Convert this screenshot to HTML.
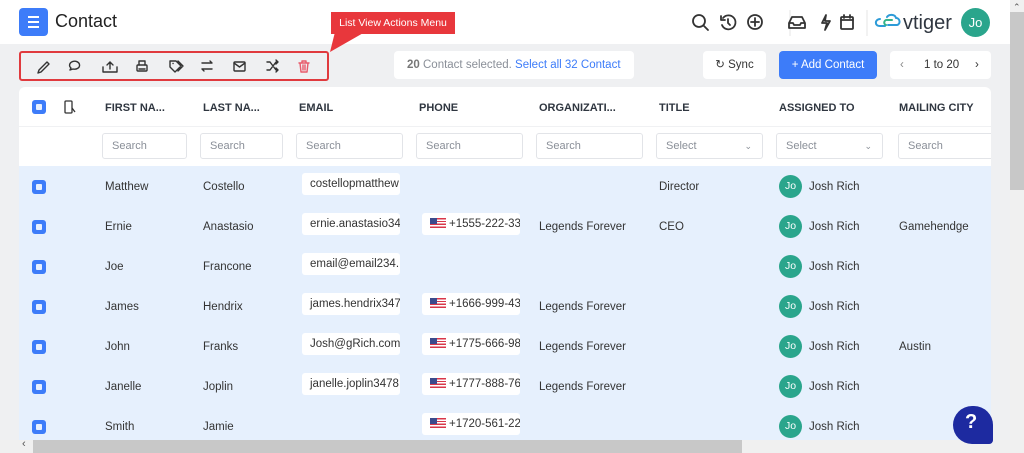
<!DOCTYPE html>
<html><head><meta charset="utf-8"><style>
*{box-sizing:border-box;margin:0;padding:0}
body{width:1024px;height:453px;overflow:hidden;background:#eff0f2;font-family:"Liberation Sans",sans-serif;color:#2b2f36;position:relative}
.abs{position:absolute}
.top{left:0;top:0;width:1010px;height:44px;background:#fff}
.vs{left:1010px;top:0;width:14px;height:453px;background:#f0f0f0}
.card{left:19px;top:87px;width:972px;height:353px;background:#fff;border-radius:6px 6px 0 0;overflow:hidden}
.row{position:absolute;left:0;width:972px;height:40px;background:#e6f0fd;font-size:11.5px;color:#333}
.row .t{top:15px}
.cb{position:absolute;left:13px;width:14px;height:14px;border-radius:3px;background:#3d7cf9}
.cb:after{content:"";position:absolute;left:4px;top:4px;width:6px;height:6px;border-radius:1px;background:#e9f0fd}
.t{position:absolute;white-space:nowrap}
.chip{position:absolute;height:22px;background:#fff;border-radius:3px;overflow:hidden;white-space:nowrap;font-size:11.5px;line-height:22px;padding-left:8px}
.av{position:absolute;width:23px;height:23px;border-radius:50%;background:#2aa58c;color:#fff;font-size:10.5px;text-align:center;line-height:23px}
.hd{position:absolute;top:15px;font-size:11px;font-weight:bold;color:#2f3640}
.in{position:absolute;top:46px;height:26px;border:1px solid #e2e4e8;border-radius:3px;font-size:11px;color:#8a8f98;line-height:24px;padding-left:9px;background:#fff}
.flag{display:inline-block;width:16px;height:10px;vertical-align:-1px;margin-right:3px;background:repeating-linear-gradient(#d9374a 0 1.4px,#fff 1.4px 2.8px);position:relative}
.flag:before{content:"";position:absolute;left:0;top:0;width:7px;height:6px;background:#3c4a8c}
</style></head><body>
<div class="abs top"></div>
<div class="abs" style="left:19px;top:8px;width:29px;height:28px;background:#3d7cf9;border-radius:4px"></div>
<div class="abs" style="left:28px;top:16px;width:11px;height:2px;background:#fff;box-shadow:0 5px 0 #fff,0 10px 0 #fff"></div>
<div class="abs" style="left:55px;top:11px;font-size:18px;color:#222">Contact</div>

<svg class="abs" style="left:690px;top:10px" width="300" height="26" viewBox="0 0 300 26" fill="none" stroke="#333" stroke-width="1.8" stroke-linecap="round" stroke-linejoin="round">
<circle cx="9" cy="11" r="6"/><path d="M13.5 15.5L18 20"/>
<path d="M33 8a7 7 0 1 1-1 7M31 6v4h4M38 9v4l2 2"/>
<circle cx="65" cy="12" r="7"/><path d="M65 8v8M61 12h8"/>
<path d="M100 0v26" stroke="#e4e4e4" stroke-width="1"/>
<path d="M99 13l3-6h10l3 6v5h-16zM99 13h4l1 2h6l1-2h4"/>
<path d="M136 5l-4 8h5l-2 7 5-9h-5z"/>
<rect x="151" y="7" width="12" height="12" rx="1"/><path d="M151 10h12M154 5v3M160 5v3"/>
<path d="M177 0v26" stroke="#e4e4e4" stroke-width="1"/>
<path d="M190 9c-5 0-6 7 0 7h5M197 7c2-3 8-3 9 1 4 0 5 6 1 7h-9" stroke="#2d9bd8" stroke-width="2"/>
<path d="M196 15c-3-1-2-6 2-5h4" stroke="#36b48a" stroke-width="2"/>
<text x="213" y="19" fill="#2f3640" stroke="none" font-family="Liberation Sans" font-size="20">vtiger</text>
</svg>
<div class="abs" style="left:961px;top:8px;width:29px;height:29px;border-radius:50%;background:#2aa58c;color:#fff;font-size:13px;text-align:center;line-height:29px">Jo</div>

<div class="abs" style="left:331px;top:12px;width:124px;height:22px;background:#e8373c;color:#fff;font-size:10.5px;text-align:center;line-height:22px">List View Actions Menu</div>
<svg class="abs" style="left:325px;top:30px" width="50" height="24"><path d="M10 2L40 2L5 22Z" fill="#e8373c"/></svg>
<div class="abs" style="left:19px;top:51px;width:310px;height:30px;border:2px solid #e03a3e;border-radius:3px;background:#eff0f2"></div>
<svg class="abs" style="left:30px;top:56px" width="290" height="20" viewBox="0 0 290 20" fill="none" stroke="#333" stroke-width="1.4" stroke-linecap="round" stroke-linejoin="round">
<path d="M9 14l8-8 2 2-8 8-3 1z"/>
<path d="M40 14l1-2a5 4 0 1 1 2 1z"/>
<path d="M73 11v5h14v-5M80 13V6M77 9l3-3 3 3"/>
<rect x="107" y="9" width="10" height="6" rx="1"/><path d="M109 9V5h6v4M109 13h6"/>
<path d="M140 5h6l5 5-6 6-5-5zM143 7.5h.1M148 5l5 5-5 5"/>
<path d="M172 7h10l-2-2M182 13h-10l2 2"/>
<rect x="204" y="6" width="11" height="9" rx="1"/><path d="M204 7l5.5 4 5.5-4"/>
<path d="M237 6h3l6 8h2M237 14h3l6-8h2M246 4l2 2-2 2M246 12l2 2-2 2"/>
<path d="M269 7h10M272 7V5h4v2M270 7l1 9h6l1-9M273 9v5M275 9v5" stroke="#e85a6b"/>
</svg>

<div class="abs" style="left:394px;top:51px;width:240px;height:28px;background:#fff;border-radius:4px;font-size:11.5px;line-height:28px;padding-left:13px;color:#8a8f98;white-space:nowrap"><b style="color:#777">20</b> Contact selected. <span style="color:#3d7cf9">Select all 32 Contact</span></div>
<div class="abs" style="left:703px;top:51px;width:63px;height:28px;background:#fff;border-radius:4px;font-size:11.5px;line-height:28px;text-align:center;color:#333">&#x21bb; Sync</div>
<div class="abs" style="left:779px;top:51px;width:98px;height:28px;background:#3d7cf9;border-radius:4px;font-size:11.5px;line-height:28px;text-align:center;color:#fff">+ Add Contact</div>
<div class="abs" style="left:890px;top:51px;width:101px;height:28px;background:#fff;border-radius:4px;font-size:11.5px;line-height:28px;color:#333"><span class="t" style="left:10px;color:#888">&#8249;</span><span class="t" style="left:34px">1 to 20</span><span class="t" style="left:85px">&#8250;</span></div>

<div class="abs card">
<div class="cb" style="top:13px"></div>
<svg class="abs" style="left:44px;top:13px" width="14" height="14" fill="none" stroke="#333" stroke-width="1.3"><rect x="2" y="1" width="7" height="12" rx="1"/><path d="M9 8l3 4"/></svg>
<div class="hd" style="left:86px">FIRST NA...</div><div class="hd" style="left:184px">LAST NA...</div><div class="hd" style="left:280px">EMAIL</div><div class="hd" style="left:400px">PHONE</div><div class="hd" style="left:520px">ORGANIZATI...</div><div class="hd" style="left:640px">TITLE</div><div class="hd" style="left:760px">ASSIGNED TO</div><div class="hd" style="left:880px">MAILING CITY</div>
<div class="abs" style="left:0;top:39px;width:972px;height:1px;background:#f0f1f3"></div>
<div class="in" style="left:83px;width:85px">Search</div><div class="in" style="left:181px;width:83px">Search</div><div class="in" style="left:277px;width:107px">Search</div><div class="in" style="left:397px;width:107px">Search</div><div class="in" style="left:517px;width:107px">Search</div><div class="in" style="left:637px;width:107px">Select<span class="t" style="right:10px;font-size:9px">&#8964;</span></div><div class="in" style="left:757px;width:107px">Select<span class="t" style="right:10px;font-size:9px">&#8964;</span></div><div class="in" style="left:879px;width:100px">Search</div>

<div class="row" style="top:79px"><div class="cb" style="top:14px"></div><span class="t" style="left:86px">Matthew</span><span class="t" style="left:184px">Costello</span><div class="chip" style="left:283px;top:7px;width:98px">costellopmatthew</div><span class="t" style="left:640px">Director</span><div class="av" style="left:760px;top:9px">Jo</div><span class="t" style="left:790px">Josh Rich</span></div>
<div class="row" style="top:119px"><div class="cb" style="top:14px"></div><span class="t" style="left:86px">Ernie</span><span class="t" style="left:184px">Anastasio</span><div class="chip" style="left:283px;top:7px;width:98px">ernie.anastasio34</div><div class="chip" style="left:403px;top:7px;width:98px"><span class="flag"></span>+1555-222-333</div><span class="t" style="left:520px">Legends Forever</span><span class="t" style="left:640px">CEO</span><div class="av" style="left:760px;top:9px">Jo</div><span class="t" style="left:790px">Josh Rich</span><span class="t" style="left:880px">Gamehendge</span></div>
<div class="row" style="top:159px"><div class="cb" style="top:14px"></div><span class="t" style="left:86px">Joe</span><span class="t" style="left:184px">Francone</span><div class="chip" style="left:283px;top:7px;width:98px">email@email234.</div><div class="av" style="left:760px;top:9px">Jo</div><span class="t" style="left:790px">Josh Rich</span></div>
<div class="row" style="top:199px"><div class="cb" style="top:14px"></div><span class="t" style="left:86px">James</span><span class="t" style="left:184px">Hendrix</span><div class="chip" style="left:283px;top:7px;width:98px">james.hendrix347</div><div class="chip" style="left:403px;top:7px;width:98px"><span class="flag"></span>+1666-999-437</div><span class="t" style="left:520px">Legends Forever</span><div class="av" style="left:760px;top:9px">Jo</div><span class="t" style="left:790px">Josh Rich</span></div>
<div class="row" style="top:239px"><div class="cb" style="top:14px"></div><span class="t" style="left:86px">John</span><span class="t" style="left:184px">Franks</span><div class="chip" style="left:283px;top:7px;width:98px">Josh@gRich.com</div><div class="chip" style="left:403px;top:7px;width:98px"><span class="flag"></span>+1775-666-989</div><span class="t" style="left:520px">Legends Forever</span><div class="av" style="left:760px;top:9px">Jo</div><span class="t" style="left:790px">Josh Rich</span><span class="t" style="left:880px">Austin</span></div>
<div class="row" style="top:279px"><div class="cb" style="top:14px"></div><span class="t" style="left:86px">Janelle</span><span class="t" style="left:184px">Joplin</span><div class="chip" style="left:283px;top:7px;width:98px">janelle.joplin3478</div><div class="chip" style="left:403px;top:7px;width:98px"><span class="flag"></span>+1777-888-764</div><span class="t" style="left:520px">Legends Forever</span><div class="av" style="left:760px;top:9px">Jo</div><span class="t" style="left:790px">Josh Rich</span></div>
<div class="row" style="top:319px"><div class="cb" style="top:14px"></div><span class="t" style="left:86px">Smith</span><span class="t" style="left:184px">Jamie</span><div class="chip" style="left:403px;top:7px;width:98px"><span class="flag"></span>+1720-561-223</div><div class="av" style="left:760px;top:9px">Jo</div><span class="t" style="left:790px">Josh Rich</span></div>
</div>

<div class="abs" style="left:0;top:440px;width:1010px;height:13px;background:#f0f0f0"></div>
<div class="abs" style="left:33px;top:440px;width:709px;height:13px;background:#c8c8c8"></div>
<div class="abs" style="left:22px;top:438px;font-size:11px;color:#555">&#8249;</div>
<div class="abs vs"></div>
<div class="abs" style="left:1010px;top:12px;width:14px;height:178px;background:#c8c8c8"></div>
<div class="abs" style="left:1013px;top:2px;font-size:9px;color:#555">&#8963;</div>
<div class="abs" style="left:953px;top:406px;width:40px;height:38px;background:#1d2aa0;border-radius:20px 20px 4px 20px"></div>
<div class="abs" style="left:965px;top:411px;font-size:20px;font-weight:bold;color:#fff">?</div>
</body></html>
